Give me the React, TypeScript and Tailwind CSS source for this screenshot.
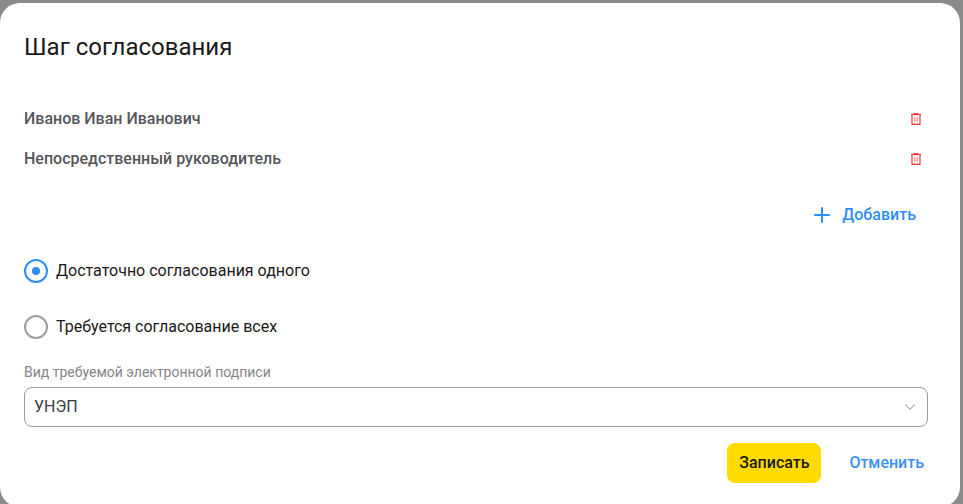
import React from 'react';
import { Plus, ChevronDown } from 'lucide-react';

const TrashIcon = () => (
  <svg width="12" height="14" viewBox="0 0 12 14" fill="none" stroke="#ff3b30" strokeWidth="1.2">
    <path d="M1 2.5H11" />
    <path d="M4.5 2.5V1.5H7.5V2.5" />
    <path d="M2 2.5V12.4H10V2.5" />
    <path d="M4.8 5V10M7.2 5V10" strokeWidth="1" strokeOpacity="0.7" />
  </svg>
);

const approvers = ['Иванов Иван Иванович', 'Непосредственный руководитель'];

const Radio: React.FC<{ label: string; checked?: boolean }> = ({ label, checked }) => (
  <div className="flex items-center h-6">
    <div
      className={`w-6 h-6 rounded-full border-2 flex items-center justify-center ${
        checked ? 'border-[#2e8ef7]' : 'border-[#9e9e9e]'
      }`}
    >
      {checked && <div className="w-2 h-2 rounded-full bg-[#2e8ef7]" />}
    </div>
    <span className="ml-[8px] text-[16px] leading-6 text-[#1a1a1a]">{label}</span>
  </div>
);

export default function App() {
  return (
    <div className="h-[504px] overflow-hidden bg-[#8a8a8a] pt-[3px] pr-[3px] font-['Roboto',sans-serif]">
      <div className="h-[504px] bg-white rounded-[20px] pl-6 pr-[36px] flex flex-col">
        <h1 className="mt-[27px] text-[24px] leading-[34px] text-[#1a1a1a]">Шаг согласования</h1>

        <div className="mt-[43px] flex flex-col gap-4">
          {approvers.map((name) => (
            <div key={name} className="flex items-center justify-between h-6 pr-[2px]">
              <span className="text-[16px] leading-6 font-medium text-[#55555a]">{name}</span>
              <TrashIcon />
            </div>
          ))}
        </div>

        <div className="mt-[32px] flex items-center justify-end h-6 text-[#2e8ef7]">
          <Plus className="w-6 h-6" strokeWidth={2} />
          <span className="ml-[8px] mr-[8px] text-[16px] leading-6 font-medium">Добавить</span>
        </div>

        <div className="mt-[32px]">
          <Radio label="Достаточно согласования одного" checked />
        </div>
        <div className="mt-[32px]">
          <Radio label="Требуется согласование всех" />
        </div>

        <label className="mt-[24px] text-[14px] leading-[18px] text-[#85858a]">Вид требуемой электронной подписи</label>
        <div className="mt-[6px] h-[40px] -mr-[4px] rounded-[8px] border border-[#9e9e9e] flex items-center justify-between pl-[9px] pr-[8px]">
          <span className="text-[16px] text-[#3c3c42]">УНЭП</span>
          <ChevronDown className="w-[18px] h-[18px] text-[#b5b5b5]" strokeWidth={1.5} />
        </div>

        <div className="mt-[16px] flex items-center justify-end">
          <button className="w-[94px] h-[40px] rounded-[8px] bg-[#ffdb00] text-[16px] font-medium text-[#1a1a1a]">Записать</button>
          <button className="ml-[28px] text-[16px] font-medium text-[#3b8ff5]">Отменить</button>
        </div>
      </div>
    </div>
  );
}
